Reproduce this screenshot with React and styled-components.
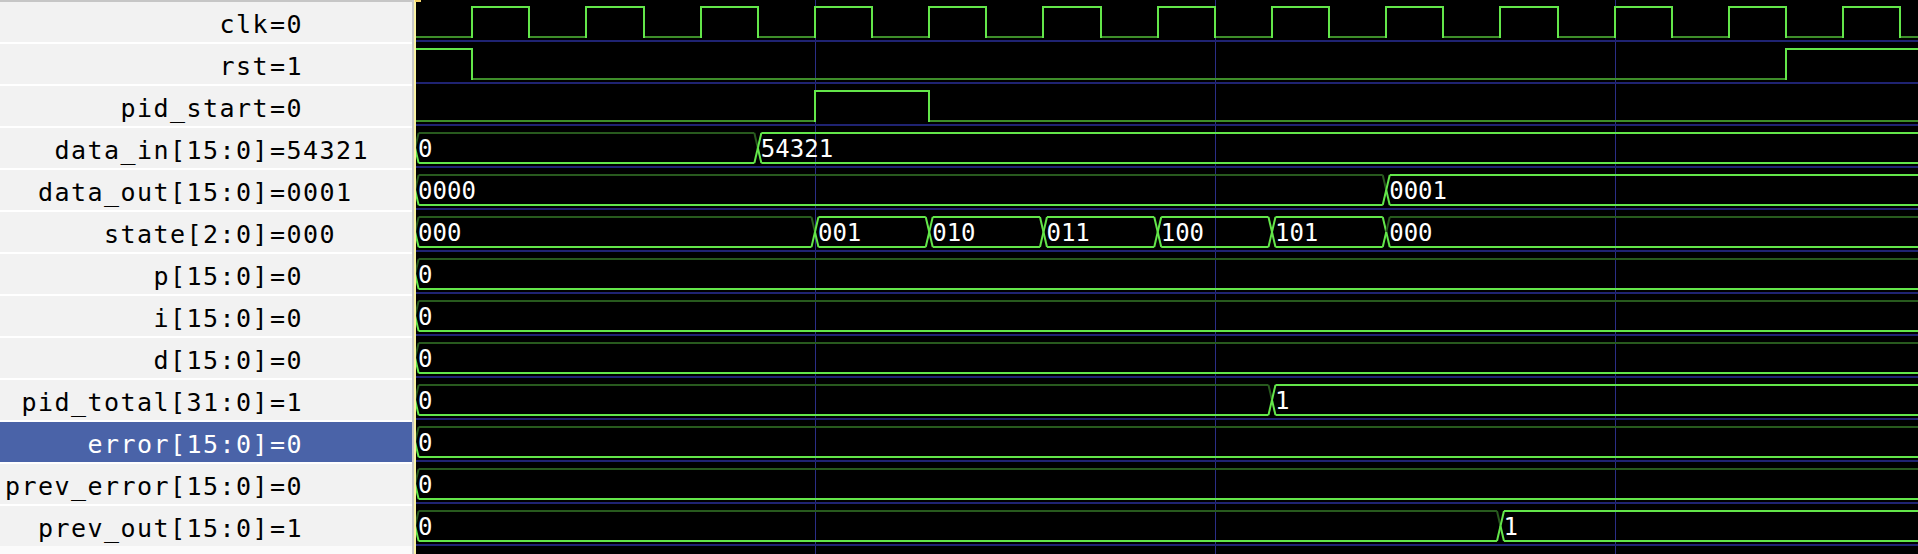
import React from 'react'
import styled, { createGlobalStyle } from 'styled-components'

const GlobalStyle = createGlobalStyle`
  html, body {
    margin: 0;
    padding: 0;
    background: #000;
    overflow: hidden;
  }
`

// ---- timing / geometry of the wave pane ----
const SCALE = 11.425 // px per time unit
const T0 = 1.1 // x of t=0 inside the wave pane
const PITCH = 42
const HALF = 3.5 // half width of a bus transition
const WAVE_W = 1504
const WAVE_H = 554

const HI = '#63e64a'
const LO = '#3e8e2a'
const ZERO_TOP = '#285a1e'
const GRID = '#2a2e86'
const SEP = '#1f2372'

const X = (t) => Math.round(T0 + t * SCALE)

const clk = []
for (let t = 0; t <= 135; t += 5) clk.push([t, (t / 5) % 2])

const signals = [
  { name: 'clk', value: '0', bit: true, changes: clk },
  { name: 'rst', value: '1', bit: true, changes: [[0, 1], [5, 0], [120, 1]] },
  { name: 'pid_start', value: '0', bit: true, changes: [[0, 0], [35, 1], [45, 0]] },
  { name: 'data_in[15:0]', value: '54321', changes: [[0, '0'], [30, '54321']] },
  { name: 'data_out[15:0]', value: '0001', changes: [[0, '0000'], [85, '0001']] },
  {
    name: 'state[2:0]',
    value: '000',
    changes: [[0, '000'], [35, '001'], [45, '010'], [55, '011'], [65, '100'], [75, '101'], [85, '000']],
  },
  { name: 'p[15:0]', value: '0', changes: [[0, '0']] },
  { name: 'i[15:0]', value: '0', changes: [[0, '0']] },
  { name: 'd[15:0]', value: '0', changes: [[0, '0']] },
  { name: 'pid_total[31:0]', value: '1', changes: [[0, '0'], [75, '1']] },
  { name: 'error[15:0]', value: '0', changes: [[0, '0']], selected: true },
  { name: 'prev_error[15:0]', value: '0', changes: [[0, '0']] },
  { name: 'prev_out[15:0]', value: '1', changes: [[0, '0'], [95, '1']] },
]

const Screen = styled.div`
  display: flex;
  width: 1918px;
  height: ${WAVE_H}px;
  overflow: hidden;
`

const SignalPane = styled.div`
  width: 412px;
  flex: none;
  background: #fbfbfb;
  font-family: 'DejaVu Sans Mono', 'Liberation Mono', monospace;
  font-size: 25px;
  letter-spacing: 1.45px;
`

const SignalRow = styled.div`
  display: flex;
  height: ${PITCH}px;
  box-sizing: border-box;
  border-top: 2px solid ${(p) => (p.$first ? '#c6c6c6' : '#ffffff')};
  background: ${(p) => (p.$selected ? '#4a63a8' : '#f2f2f2')};
  color: ${(p) => (p.$selected ? '#ffffff' : '#000000')};
  line-height: 45px;
  overflow: hidden;
  white-space: nowrap;
`

const SignalName = styled.span`
  width: 269px;
  flex: none;
  text-align: right;
`

const SignalValue = styled.span`
  margin-left: 1px;
`

const Divider = styled.div`
  width: 2px;
  flex: none;
  background: #c8c8c8;
`

const WavePane = styled.div`
  flex: 1;
  background: #000;
  svg {
    display: block;
  }
`

const WaveText = styled.text`
  font-family: 'DejaVu Sans Mono', 'Liberation Mono', monospace;
  font-size: 24px;
  fill: #ffffff;
`

const isZero = (v) => /^0+$/.test(v)

function BitTrace({ row, changes }) {
  const top = row * PITCH + 7
  const bot = row * PITCH + 37
  const flat = []
  const edges = []
  changes.forEach(([t, v], i) => {
    const x1 = X(t)
    const x2 = i + 1 < changes.length ? X(changes[i + 1][0]) : WAVE_W
    const y = v ? top : bot
    flat.push(<rect key={'h' + i} x={x1} y={y - 1} width={x2 - x1 + 1} height={2} fill={v ? HI : LO} />)
    if (i > 0) edges.push(<rect key={'v' + i} x={x1 - 1} y={top - 1} width={2} height={bot - top + 2} fill={HI} />)
  })
  return (
    <g>
      {flat}
      {edges}
    </g>
  )
}

function BusTrace({ row, changes }) {
  const top = row * PITCH + 7
  const bot = row * PITCH + 37
  const mid = row * PITCH + 22
  const parts = []
  changes.forEach(([t, v], i) => {
    const xt = T0 + t * SCALE
    const xn = i + 1 < changes.length ? T0 + changes[i + 1][0] * SCALE - HALF : WAVE_W
    const topColor = isZero(v) ? ZERO_TOP : HI
    // entering half of the transition
    parts.push(<line key={'a' + i} x1={xt} y1={mid} x2={xt + HALF} y2={top} stroke={topColor} strokeWidth={2} />)
    parts.push(<line key={'b' + i} x1={xt} y1={mid} x2={xt + HALF} y2={bot} stroke={HI} strokeWidth={2} />)
    // flat top and bottom
    parts.push(<line key={'t' + i} x1={xt + HALF} y1={top} x2={xn} y2={top} stroke={topColor} strokeWidth={2} />)
    parts.push(<line key={'u' + i} x1={xt + HALF} y1={bot} x2={xn} y2={bot} stroke={HI} strokeWidth={2} />)
    // leaving half
    if (i + 1 < changes.length) {
      const xe = xn + HALF
      parts.push(<line key={'c' + i} x1={xn} y1={top} x2={xe} y2={mid} stroke={topColor} strokeWidth={2} />)
      parts.push(<line key={'d' + i} x1={xn} y1={bot} x2={xe} y2={mid} stroke={HI} strokeWidth={2} />)
    }
    parts.push(
      <WaveText key={'s' + i} x={xt + 3} y={row * PITCH + 31}>
        {v}
      </WaveText>
    )
  })
  return <g>{parts}</g>
}

function Waves() {
  return (
    <svg width={WAVE_W} height={WAVE_H}>
      {[35, 70, 105].map((t) => (
        <rect key={t} x={X(t)} y={0} width={1} height={WAVE_H} fill={GRID} />
      ))}
      {signals.map((s, k) => (
        <rect key={'sep' + k} x={0} y={k * PITCH + 40} width={WAVE_W} height={2} fill={SEP} />
      ))}
      {signals.map((s, k) =>
        s.bit ? <BitTrace key={s.name} row={k} changes={s.changes} /> : <BusTrace key={s.name} row={k} changes={s.changes} />
      )}
      <rect x={0} y={0} width={2} height={WAVE_H} fill="#fbf3a4" />
      <rect x={1} y={0} width={6} height={2} fill="#f3d36a" />
    </svg>
  )
}

export default function App() {
  return (
    <>
      <GlobalStyle />
      <Screen>
        <SignalPane>
          {signals.map((s, k) => (
            <SignalRow key={s.name} $first={k === 0} $selected={s.selected}>
              <SignalName>{s.name}</SignalName>
              <SignalValue>={s.value}</SignalValue>
            </SignalRow>
          ))}
        </SignalPane>
        <Divider />
        <WavePane>
          <Waves />
        </WavePane>
      </Screen>
    </>
  )
}
